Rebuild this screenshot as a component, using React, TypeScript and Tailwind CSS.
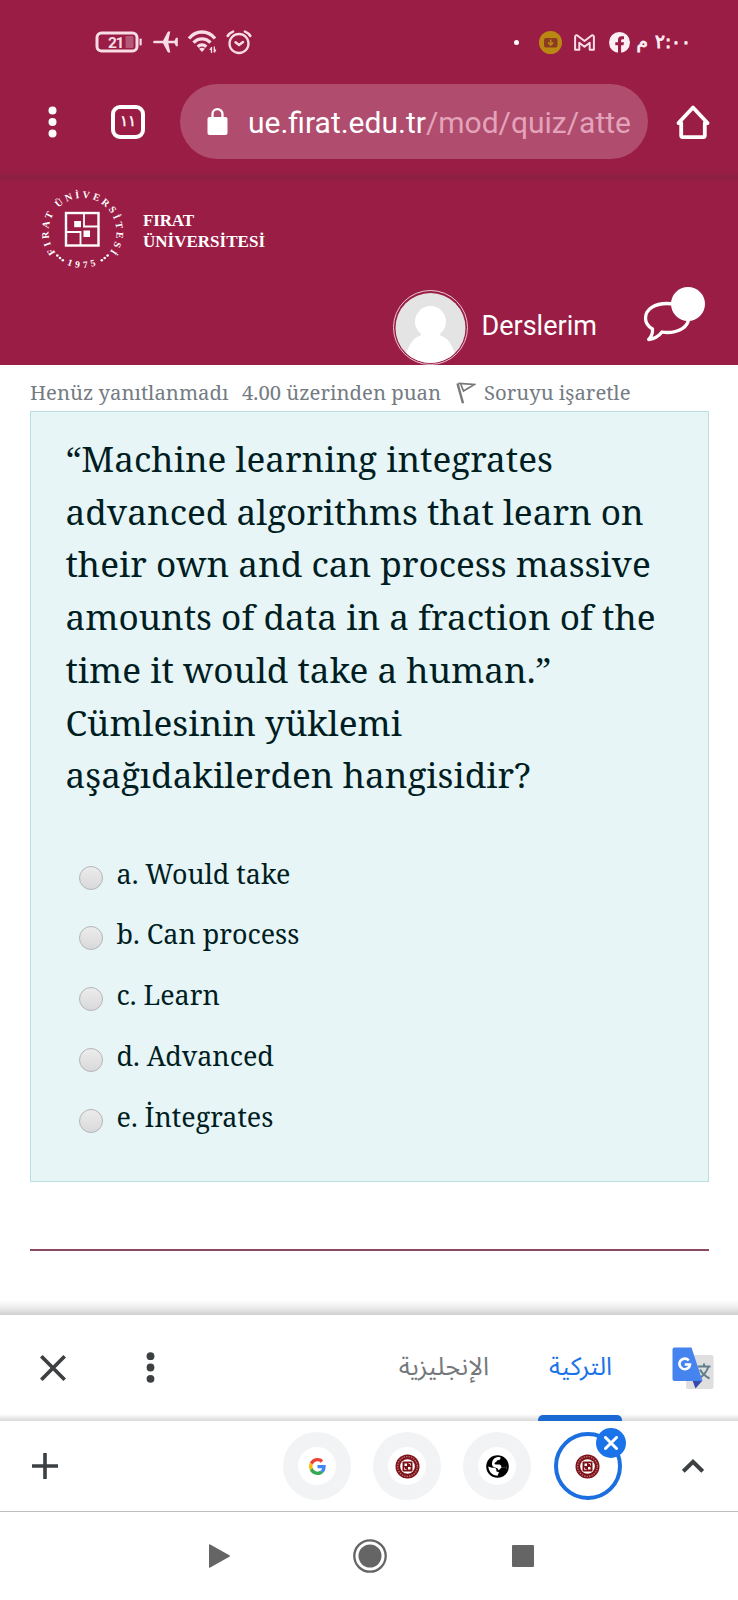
import React from "react";

const questionLines = [
  "“Machine learning integrates",
  "advanced algorithms that learn on",
  "their own and can process massive",
  "amounts of data in a fraction of the",
  "time it would take a human.”",
  "Cümlesinin yüklemi",
  "aşağıdakilerden hangisidir?",
];

const options = ["a. Would take", "b. Can process", "c. Learn", "d. Advanced", "e. İntegrates"];

const serif = "font-['Noto_Serif','DejaVu_Serif',serif]";

function StatusBar() {
  return (
    <div className="flex h-[84px] items-center text-[#f8dce6]">
      <svg className="ml-[95px] h-[22px] w-[48px]" viewBox="0 0 48 22" fill="none">
        <rect x="2" y="2" width="40" height="18" rx="4.5" stroke="currentColor" strokeWidth="3" />
        <rect x="30.500" y="5" width="8" height="12" rx="1" fill="#b45877" />
        <rect x="44.5" y="7.5" width="2.2" height="7" rx="1" fill="currentColor" />
        <text x="13" y="16.5" fill="currentColor" fontFamily="Roboto, sans-serif" fontWeight="700" fontSize="15.5" textLength="16.5">21</text>
      </svg>
      <svg className="ml-[10px] h-[22px] w-[26px]" viewBox="0 0 26 22" fill="currentColor">
        <path d="M1.500 9.700H10L14.500 1.200Q15 .4 15.800.6H17.300L15.300 9.700H21.500L23 6.700H24.800V15.300H23L21.500 12.300H15.300L17.300 21.400H15.800Q15 21.600 14.500 20.800L10 12.300H1.500Q.1 12.200.1 11T1.500 9.700Z" />
      </svg>
      <svg className="ml-[8px] h-[24px] w-[31px]" viewBox="0 0 31 24" fill="none" stroke="currentColor" strokeWidth="3.300">
        <path d="M2 8.500C9-.2 21-.2 28 8.500M6.500 12.700c4.800-5.200 12.200-5.200 17 0M10.700 16.700c2.600-2.400 6-2.400 8.600 0" />
        <path d="M12 18.700q3-2 6 0L15 22Z" fill="currentColor" stroke="none" />
        <path d="M24.500 17v6m-1.700-3 1.700-2.500M27.300 16.500v6m1.500-3-1.500 3" strokeWidth="1.300" />
      </svg>
      <svg className="ml-[8px] h-[25px] w-[26px]" viewBox="0 0 26 25" fill="none" stroke="currentColor" strokeLinecap="round">
        <circle cx="13" cy="13.500" r="9.500" strokeWidth="2.300" />
        <path d="M9.500 12.300l3.500 2.700 4-3" strokeWidth="2.400" />
        <path d="M1.700 6Q3.500 3 7 1.600M24.300 6Q22.500 3 19 1.600" strokeWidth="2.600" />
      </svg>
      <span className="ml-[262px] size-[5px] rounded-full bg-white" />
      <svg className="ml-[20px] size-[23px]" viewBox="0 0 23 23">
        <circle cx="11.500" cy="11.500" r="11.500" fill="#ba8812" />
        <rect x="5" y="7" width="13.500" height="9.500" rx="2" fill="#8b3b22" />
        <path d="M11.700 8.500v5M9.200 11.500l2.500 2.500 2.500-2.500" stroke="#ba8812" strokeWidth="1.600" fill="none" />
      </svg>
      <svg className="ml-[12px] h-[17px] w-[21px]" viewBox="0 0 21 17" fill="none" stroke="currentColor" strokeWidth="2" strokeLinejoin="round">
        <path d="M1.100 15.800V3.300Q1.100 1 3 1.200L10.500 7 18 1.200Q19.900 1 19.900 3.300V15.800H15.700V8.700L10.500 12.700 5.300 8.700V15.800Z" />
      </svg>
      <svg className="ml-[14px] size-[21px]" viewBox="0 0 21 21">
        <circle cx="10.500" cy="10.500" r="10.500" fill="#fdf0f5" />
        <path d="M9 21V13.300H6.300V10.200H9V8Q9 4.300 12.500 4.300H15V7.200H13.400Q12.100 7.200 12.100 8.500V10.200H15L14.500 13.300H12.100V21Z" fill="#9a1d46" />
      </svg>
      <span dir="rtl" className="ml-[12px] w-[49px] whitespace-nowrap font-['DejaVu_Sans',sans-serif] text-[18.500px] leading-6 tracking-[-0.6px] text-[#fdf0f5] [-webkit-text-stroke:0.8px_#fdf0f5] [word-spacing:1px]">
        ٢:٠٠ م
      </span>
    </div>
  );
}

function AddressBar() {
  return (
    <div className="flex h-[75px] items-center text-white">
      <svg className="ml-[48px] h-[32px] w-[9px]" viewBox="0 0 9 32" fill="currentColor">
        <circle cx="4.500" cy="4.500" r="4" />
        <circle cx="4.500" cy="16" r="4" />
        <circle cx="4.500" cy="27.500" r="4" />
      </svg>
      <div className="ml-[54px] flex size-[34px] items-center justify-center rounded-[9px] border-[4px] border-white font-['DejaVu_Sans',sans-serif] text-[15px] leading-none tracking-[-1px] [-webkit-text-stroke:0.4px_white]">
        ١١
      </div>
      <div className="ml-[35px] flex h-[75px] w-[468px] items-center rounded-full bg-[#b04c6d]">
        <svg className="ml-[27px] h-[27px] w-[21px]" viewBox="0 0 21 27">
          <rect x=".5" y="9" width="20" height="18" rx="2" fill="white" />
          <path d="M5.500 10V6a5 4.800 0 0 1 10 0v4" fill="none" stroke="white" strokeWidth="2.300" />
        </svg>
        <span className="ml-[20px] whitespace-nowrap pt-[3px] font-[Roboto] text-[30px] leading-10">
          ue.firat.edu.tr<span className="text-[#e3a3ba]">/mod/quiz/atte</span>
        </span>
      </div>
      <svg className="ml-[28px] size-[34px]" viewBox="0 0 34 34" fill="none" stroke="currentColor" strokeWidth="3.800">
        <path d="M2.500 18 17 2.500 31.500 18H28.800V30.500Q28.800 32.200 27 32.200H7Q5.200 32.200 5.200 30.500V18Z" strokeLinejoin="round" />
      </svg>
    </div>
  );
}

function UniversityLogo() {
  return (
    <svg className="ml-[36px] h-[94px] w-[232px]" viewBox="36 182 232 94" fill="white">
      <defs>
        <path id="ring" d="M55.500 252.500A34 34 0 1 1 109.500 252.500" />
        <path id="ringBottom" d="M53 255A39.500 39.500 0 0 0 111.400 255" />
      </defs>
      <text fontFamily="Liberation Serif, serif" fontSize="10" fontWeight="700">
        <textPath href="#ring" textLength="150">FIRAT ÜNİVERSİTESİ</textPath>
      </text>
      <text fontFamily="Liberation Serif, serif" fontSize="9.500" fontWeight="700">
        <textPath href="#ringBottom" startOffset="17" textLength="30">1975</textPath>
      </text>
      <circle cx="57.300" cy="255.500" r="1.300" /><circle cx="60" cy="258" r="1.300" /><circle cx="62.800" cy="260.200" r="1.300" />
      <circle cx="107.600" cy="255.500" r="1.300" /><circle cx="104.700" cy="258" r="1.300" /><circle cx="101.800" cy="260.200" r="1.300" />
      <g fill="none" stroke="white">
        <rect x="66" y="213" width="32.500" height="32.500" strokeWidth="2.400" />
        <path d="M84 213V226.500H98.500M66 232H80.500V245.500" strokeWidth="1.800" />
      </g>
      <rect x="74.200" y="221" width="6.800" height="6.200" />
      <rect x="83.500" y="230.500" width="6.500" height="6.500" />
      <text x="143" y="225.500" fontFamily="Liberation Serif, serif" fontWeight="700" fontSize="17" textLength="51">FIRAT</text>
      <text x="143" y="246.500" fontFamily="Liberation Serif, serif" fontWeight="700" fontSize="17" textLength="122">ÜNİVERSİTESİ</text>
    </svg>
  );
}

function SiteHeader() {
  return (
    <header className="flex h-[183px] flex-col">
      <UniversityLogo />
      <div className="flex h-[89px] items-end">
        <div className="ml-[393px] flex size-[75px] shrink-0 items-center justify-center rounded-full border border-[#eac9d5] p-[1px]">
          <svg className="size-[72px]" viewBox="0 0 72 72">
            <defs>
              <clipPath id="face"><circle cx="36" cy="36" r="35.500" /></clipPath>
            </defs>
            <g clipPath="url(#face)">
              <rect width="72" height="72" fill="#e4e4e4" />
              <circle cx="36" cy="29.500" r="15.700" fill="white" />
              <path d="M26 42H46V47H26Z" fill="white" />
              <path d="M9 72Q14 43 30 43H42Q58 43 63 72Z" fill="white" />
            </g>
          </svg>
        </div>
        <span className="ml-[13.500px] w-[116.500px] pb-[20px] font-[Roboto] text-[27px] leading-[38px] text-white">Derslerim</span>
        <svg className="mb-[20px] ml-[44px] h-[60px] w-[66px]" viewBox="642 285 66 60">
          <path d="M652.500 329Q645.500 325 645.500 318C645.500 309 655 303.500 667 303.500S688.500 309 688.500 318 679 332.500 667 332.500Q664.500 332.500 662 332 657 338.500 648.700 339.500 653 335 652.500 329Z" fill="none" stroke="white" strokeWidth="3.300" strokeLinejoin="round" />
          <circle cx="688" cy="304" r="17" fill="white" />
        </svg>
      </div>
    </header>
  );
}

function QuestionInfo() {
  return (
    <div className={`flex h-[46px] items-center whitespace-nowrap pl-[30px] pt-[8px] text-[20.3px] leading-7 text-[#747b82] ${serif}`}>
      <span className="w-[212px]">Henüz yanıtlanmadı</span>
      <span className="w-[214px]">4.00 üzerinden puan</span>
      <svg className="mt-[2px] h-[22px] w-[20px]" viewBox="0 0 20 22" fill="none" stroke="#777" strokeWidth="1.700">
        <path d="M1.500 1.500 7 21.300" strokeWidth="2.400" />
        <path d="M2.300 1.300 18.500 2.500 7.500 9 4.500 1.500" />
      </svg>
      <span className="ml-[8px]">Soruyu işaretle</span>
    </div>
  );
}

function Question() {
  return (
    <section className={`ml-[29.500px] mr-[29px] h-[771px] border border-[#b9dfe3] bg-[#e7f5f7] pl-[35px] pt-[20px] text-[#001d22] ${serif}`}>
      <div className="text-[35.15px] leading-[52.7px]">
        {questionLines.map((line) => (
          <p key={line} className="w-fit whitespace-nowrap">{line}</p>
        ))}
      </div>
      <div className="mt-[43px] pl-[13.5px] text-[26.9px]">
        {options.map((option) => (
          <label key={option} className="flex h-[60.7px] items-center">
            <span className="mt-[7px] size-[24px] rounded-full border border-[#b3b5b8] bg-linear-to-b from-[#ececec] to-[#d9d9db]" />
            <span className="ml-[13.500px] whitespace-nowrap pb-px leading-9">{option}</span>
          </label>
        ))}
      </div>
    </section>
  );
}

function TranslateIcon() {
  return (
    <svg className="h-[43px] w-[42px]" viewBox="0 0 42 43">
      <rect x="14" y="8" width="27.500" height="34" rx="2" fill="#dfdfdf" />
      <path d="M26 19.500H38.500M32 16.500V19.500M36.500 19.500Q34 27 27 31.500M28 22.500Q31 28 37.500 31.500" stroke="#607d8b" strokeWidth="2" fill="none" />
      <path d="M20.500 33.500H30.500L23.500 41.500Z" fill="#3949ab" />
      <path d="M2.500.5H19.500L30.500 34H2.500Q.5 34 .5 32V2.500Q.5.500 2.500.5Z" fill="#4584ee" />
      <path d="M16.800 13.500A5.300 5.300 0 1 0 18 17.500H12.800" fill="none" stroke="white" strokeWidth="2.600" />
    </svg>
  );
}

function TranslateBar() {
  return (
    <div className="flex h-[106px] flex-col">
      <div className="flex h-[99px] items-center pt-[6px]">
        <svg className="ml-[40px] size-[26px]" viewBox="0 0 26 26" stroke="#3c4043" strokeWidth="3.700">
          <path d="M1.300 1.300 24.700 24.700M24.700 1.300 1.300 24.700" />
        </svg>
        <svg className="ml-[80px] h-[31px] w-[9px]" viewBox="0 0 9 31" fill="#3c4043">
          <circle cx="4.500" cy="4.200" r="3.900" />
          <circle cx="4.500" cy="15.500" r="3.900" />
          <circle cx="4.500" cy="26.800" r="3.900" />
        </svg>
        <span dir="rtl" className="ml-[243px] w-[91px] whitespace-nowrap pb-px font-['Noto_Sans_Arabic','DejaVu_Sans',sans-serif] text-[25.4px] leading-8 text-[#75787b]">الإنجليزية</span>
        <span dir="rtl" className="ml-[60px] w-[63px] whitespace-nowrap pb-px font-['Noto_Sans_Arabic','DejaVu_Sans',sans-serif] text-[25.2px] leading-8 text-[#1a73e8]">التركية</span>
        <div className="ml-[60px] pt-px"><TranslateIcon /></div>
      </div>
      <div className="flex h-[7px] items-end bg-linear-to-b from-white to-[#d9d9d9]">
        <div className="ml-[538px] h-[6px] w-[84px] rounded-t-[5px] bg-[#1b68d2]" />
      </div>
    </div>
  );
}

function GoogleG() {
  return (
    <svg className="size-[17px]" viewBox="0 0 48 48">
      <path fill="#EA4335" d="M24 9.500c3.540 0 6.710 1.220 9.210 3.600l6.850-6.850C35.900 2.380 30.470 0 24 0 14.620 0 6.510 5.380 2.560 13.220l7.980 6.190C12.430 13.720 17.740 9.500 24 9.500z" />
      <path fill="#4285F4" d="M46.980 24.550c0-1.570-.15-3.090-.38-4.550H24v9.020h12.940c-.58 2.960-2.260 5.480-4.780 7.180l7.730 6c4.510-4.180 7.090-10.360 7.090-17.650z" />
      <path fill="#FBBC05" d="M10.530 28.590c-.48-1.450-.76-2.990-.76-4.590s.27-3.140.76-4.590l-7.980-6.190C.92 16.460 0 20.120 0 24c0 3.880.92 7.540 2.560 10.780l7.970-6.190z" />
      <path fill="#34A853" d="M24 48c6.480 0 11.930-2.130 15.890-5.810l-7.730-6c-2.150 1.450-4.920 2.300-8.160 2.300-6.260 0-11.570-4.220-13.470-9.910l-7.980 6.190C6.510 42.620 14.620 48 24 48z" />
    </svg>
  );
}

function Seal() {
  return (
    <svg className="size-[25px]" viewBox="0 0 25 25">
      <circle cx="12.500" cy="12.500" r="12" fill="#7d1118" />
      <circle cx="12.500" cy="12.500" r="9.900" fill="none" stroke="#bd7a7e" strokeWidth="1.400" strokeDasharray="1.300 1.200" />
      <circle cx="12.500" cy="12.500" r="7.300" fill="white" />
      <rect x="7.500" y="7.500" width="10" height="10" rx="1" fill="#7d1118" />
      <path d="M9.500 9.500H12V12H9.500ZM13 13H15.500V15.500H13Z" fill="white" />
      <path d="M13.500 9.500H15.500V11.500M9.500 13.500V15.500H11.500" fill="none" stroke="#e3bcbe" strokeWidth="1" />
    </svg>
  );
}

function Globe() {
  return (
    <svg className="size-[23px]" viewBox="0 0 23 23">
      <circle cx="11.500" cy="11.500" r="11.300" fill="black" />
      <path d="M14.500 2.300Q14.800 5.300 11.800 5.300Q10.300 5.500 10.300 7Q8.500 7 8.500 8.500Q8.500 9.500 10 9.500H13.500Q15.500 10 15.500 12.500Q18 13.300 20.700 11.500Q20.200 17.500 15.200 20.200Q15.200 16.800 12.500 15Q12 12.800 9 12.500Q5.800 12 6 8.500Q6 4 10.500 2.200Q12.500 1.700 14.500 2.300Z" fill="white" />
      <path d="M12.500 15.500 15.500 12.500Q18 13.300 20.700 11.500L19.500 18 15 21Z" fill="black" />
      <path d="M2.200 11.500 6 12.700H9Q10.700 13.500 10.500 16.500L13 17.300 11.500 20.800Q3.200 20.200 2.200 11.500Z" fill="white" />
    </svg>
  );
}

function TabDisc({ children }: { children: React.ReactNode }) {
  return (
    <div className="flex size-[68px] items-center justify-center rounded-full bg-[#f1f3f4]">
      <div className="flex size-[38px] items-center justify-center rounded-full bg-white">{children}</div>
    </div>
  );
}

function TabStrip() {
  return (
    <div className="flex h-[91px] items-center border-b border-[#bdbdbd]">
      <svg className="ml-[32px] size-[26px]" viewBox="0 0 26 26" stroke="#3c4043" strokeWidth="3.600">
        <path d="M13 0V26M0 13H26" />
      </svg>
      <div className="ml-[225px] flex gap-[22.2px]">
        <TabDisc><GoogleG /></TabDisc>
        <TabDisc><Seal /></TabDisc>
        <TabDisc><Globe /></TabDisc>
        <div className="relative flex size-[68px] items-center justify-center rounded-full border-4 border-[#1b6fdf]">
          <Seal />
          <div className="absolute -right-[8px] -top-[8px] flex size-[30px] items-center justify-center rounded-full bg-[#1a73e8]">
            <svg className="size-[14px]" viewBox="0 0 14 14" stroke="white" strokeWidth="3" strokeLinecap="round">
              <path d="M1.500 1.500 12.500 12.500M12.500 1.500 1.500 12.500" />
            </svg>
          </div>
        </div>
      </div>
      <svg className="ml-[60px] h-[14px] w-[22px]" viewBox="0 0 22 14" fill="none" stroke="#3c4043" strokeWidth="4">
        <path d="M1.300 12.300 11 2.800 20.700 12.300" />
      </svg>
    </div>
  );
}

function SystemNav() {
  return (
    <div className="flex h-[88px] items-center">
      <svg className="ml-[209px] h-[24px] w-[21px]" viewBox="0 0 21 24" fill="#656565">
        <path d="M0 1Q0-.3 1.200.4L20.400 11.200Q21.400 12 20.400 12.800L1.200 23.600Q0 24.300 0 23Z" />
      </svg>
      <svg className="ml-[123px] size-[34px]" viewBox="0 0 34 34">
        <circle cx="17" cy="17" r="15.700" fill="none" stroke="#656565" strokeWidth="2.300" />
        <circle cx="17" cy="17" r="11.500" fill="#656565" />
      </svg>
      <div className="ml-[125px] size-[22px] rounded-[1px] bg-[#656565]" />
    </div>
  );
}

export default function App() {
  return (
    <div className="flex h-[1600px] w-[738px] flex-col overflow-hidden bg-white">
      <div className="h-[365px] bg-[#9a1d46]">
        <StatusBar />
        <AddressBar />
        <div className="mt-[12px] h-[11px] bg-linear-to-b from-[#9a1d46] via-[#8c2042] to-[#981d45]" />
        <SiteHeader />
      </div>
      <QuestionInfo />
      <Question />
      <div className="ml-[29.500px] mr-[29px] mt-[67px] h-[2px] bg-[#8b4863]" />
      <div className="mt-[49px] h-[15px] bg-linear-to-b from-white via-[#ededed] to-[#cfcfcf]" />
      <TranslateBar />
      <TabStrip />
      <SystemNav />
    </div>
  );
}
